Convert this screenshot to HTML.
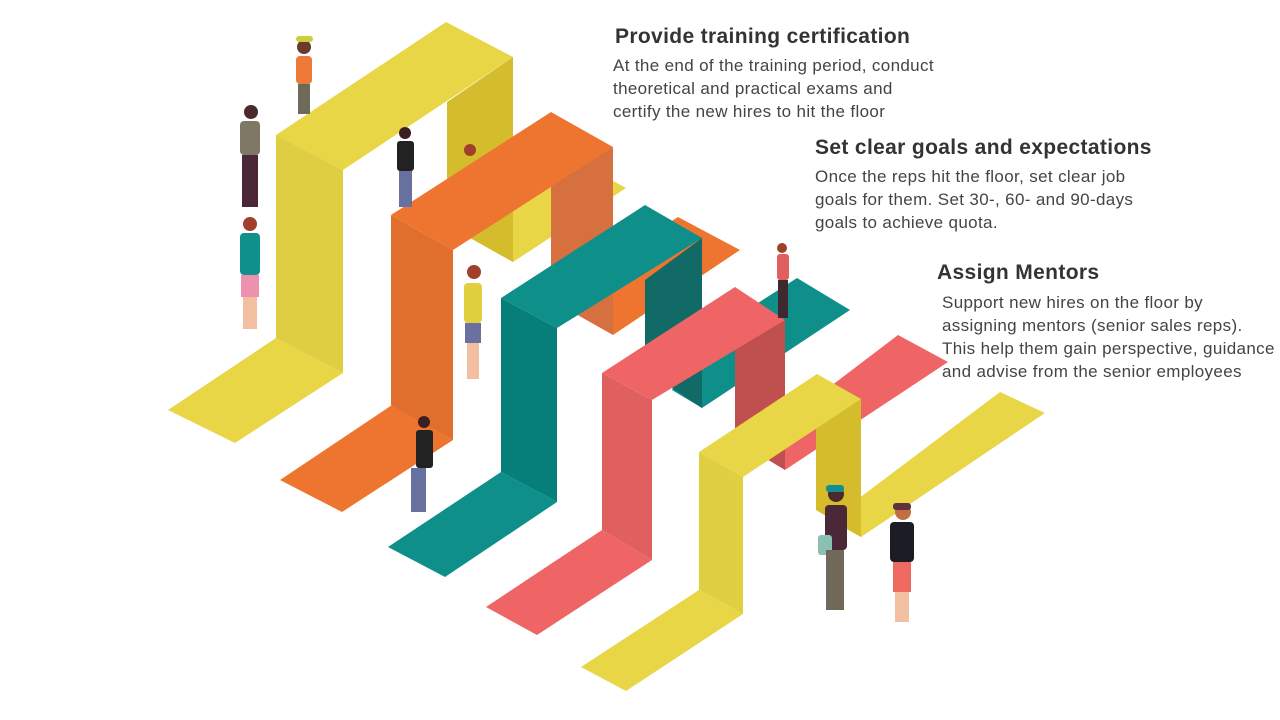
<!DOCTYPE html>
<html><head><meta charset="utf-8"><style>
body{margin:0;width:1280px;height:720px;background:#fff;overflow:hidden;position:relative;font-family:"Liberation Sans",sans-serif}
svg{position:absolute;left:0;top:0}
.h{position:absolute;font-weight:bold;font-size:21px;letter-spacing:0.35px;color:#333;white-space:nowrap}
.p{position:absolute;font-size:17px;letter-spacing:0.35px;line-height:23px;color:#444;white-space:nowrap}
</style></head><body>
<svg width="1280" height="720" viewBox="0 0 1280 720">
<polygon points="447,225 513,262 626,188 560,152" fill="#e8d646"/>
<polygon points="447,102 513,57 513,262 447,225" fill="#d5bc2c"/>
<polygon points="168,410 276,338 343,373 235,443" fill="#e8d646"/>
<polygon points="276,135 343,170 343,373 276,338" fill="#dfcd42"/>
<polygon points="276,135 446,22 513,57 343,170" fill="#e8d646"/>
<polygon points="580,280 613,335 740,250 678,217" fill="#ee7530"/>
<polygon points="551,185 613,147 613,335 551,300" fill="#d6703e"/>
<polygon points="280,480 392,405 453,440 342,512" fill="#ee7530"/>
<polygon points="391,215 453,250 453,440 391,405" fill="#e06f2e"/>
<polygon points="391,215 551,112 613,147 453,250" fill="#ee7530"/>
<polygon points="672,390 702,408 850,310 797,278 700,340" fill="#0f8f8a"/>
<polygon points="645,280 702,238 702,408 645,370" fill="#116a66"/>
<polygon points="388,547 501,472 557,502 445,577" fill="#0f8f8a"/>
<polygon points="501,298 557,328 557,502 501,472" fill="#067e7a"/>
<polygon points="501,298 645,205 702,238 557,328" fill="#0f8f8a"/>
<polygon points="760,440 785,470 948,362 898,335" fill="#ef6464"/>
<polygon points="735,345 785,320 785,470 735,440" fill="#c05050"/>
<polygon points="486,607 602,530 652,560 537,635" fill="#ef6464"/>
<polygon points="602,373 652,400 652,560 602,530" fill="#e06060"/>
<polygon points="602,373 735,287 785,320 652,400" fill="#ef6464"/>
<polygon points="830,520 861,537 1045,413 1000,392" fill="#e8d646"/>
<polygon points="816,415 861,399 861,537 816,510" fill="#d5bc2c"/>
<polygon points="581,667 699,590 743,614 626,691" fill="#e8d646"/>
<polygon points="699,452 743,477 743,614 699,590" fill="#ded040"/>
<polygon points="699,452 817,374 861,399 743,477" fill="#e8d646"/>
<g>
<circle cx="304" cy="47" r="7" fill="#6b3a2a"/><rect x="296" y="36" width="17" height="6" rx="3" fill="#c8d040"/>
<rect x="296" y="56" width="16" height="28" rx="4" fill="#ee7a3a"/><rect x="298" y="84" width="12" height="30" fill="#6e6a5a"/>
<circle cx="251" cy="112" r="7" fill="#4a2a2a"/><rect x="240" y="121" width="20" height="34" rx="4" fill="#807866"/><rect x="242" y="155" width="16" height="52" fill="#4a2838"/>
<circle cx="250" cy="224" r="7" fill="#a0402a"/><rect x="240" y="233" width="20" height="42" rx="4" fill="#0f908a"/><rect x="241" y="275" width="18" height="22" fill="#ee90b0"/><rect x="243" y="297" width="14" height="32" fill="#f2c0a0"/>
<circle cx="405" cy="133" r="6" fill="#3a2020"/><rect x="397" y="141" width="17" height="30" rx="3" fill="#222"/><rect x="399" y="171" width="13" height="36" fill="#6870a0"/>
<circle cx="470" cy="150" r="6" fill="#a0402a"/>
<circle cx="474" cy="272" r="7" fill="#a0402a"/><rect x="464" y="283" width="18" height="40" rx="4" fill="#e0d040"/><rect x="465" y="323" width="16" height="20" fill="#6a70a0"/><rect x="467" y="343" width="12" height="36" fill="#f2c0a0"/>
<circle cx="424" cy="422" r="6" fill="#3a2020"/><rect x="416" y="430" width="17" height="38" rx="3" fill="#222"/><rect x="411" y="468" width="15" height="44" fill="#6870a0"/>
<circle cx="782" cy="248" r="5" fill="#a0402a"/><rect x="777" y="254" width="12" height="26" rx="3" fill="#e06060"/><rect x="778" y="280" width="10" height="38" fill="#402830"/>
<circle cx="836" cy="494" r="8" fill="#4a2a2a"/><rect x="826" y="485" width="18" height="7" rx="3" fill="#109090"/><rect x="825" y="505" width="22" height="45" rx="4" fill="#4a2838"/><rect x="818" y="535" width="14" height="20" rx="3" fill="#8ac0b0"/><rect x="826" y="550" width="18" height="60" fill="#706858"/>
<circle cx="903" cy="512" r="8" fill="#c07040"/><rect x="893" y="503" width="18" height="7" rx="3" fill="#603040"/><rect x="890" y="522" width="24" height="40" rx="4" fill="#1c1c24"/><rect x="893" y="562" width="18" height="30" fill="#ee6a60"/><rect x="895" y="592" width="14" height="30" fill="#f2c0a0"/>
</g>
</svg>
<div class="h" style="left:615px;top:25px">Provide training certification</div>
<div class="p" style="left:613px;top:54px">At the end of the training period, conduct<br>theoretical and practical exams and<br>certify the new hires to hit the floor</div>
<div class="h" style="left:815px;top:136px">Set clear goals and expectations</div>
<div class="p" style="left:815px;top:165px">Once the reps hit the floor, set clear job<br>goals for them. Set 30-, 60- and 90-days<br>goals to achieve quota.</div>
<div class="h" style="left:937px;top:261px">Assign Mentors</div>
<div class="p" style="left:942px;top:291px">Support new hires on the floor by<br>assigning mentors (senior sales reps).<br>This help them gain perspective, guidance<br>and advise from the senior employees</div>
</body></html>
